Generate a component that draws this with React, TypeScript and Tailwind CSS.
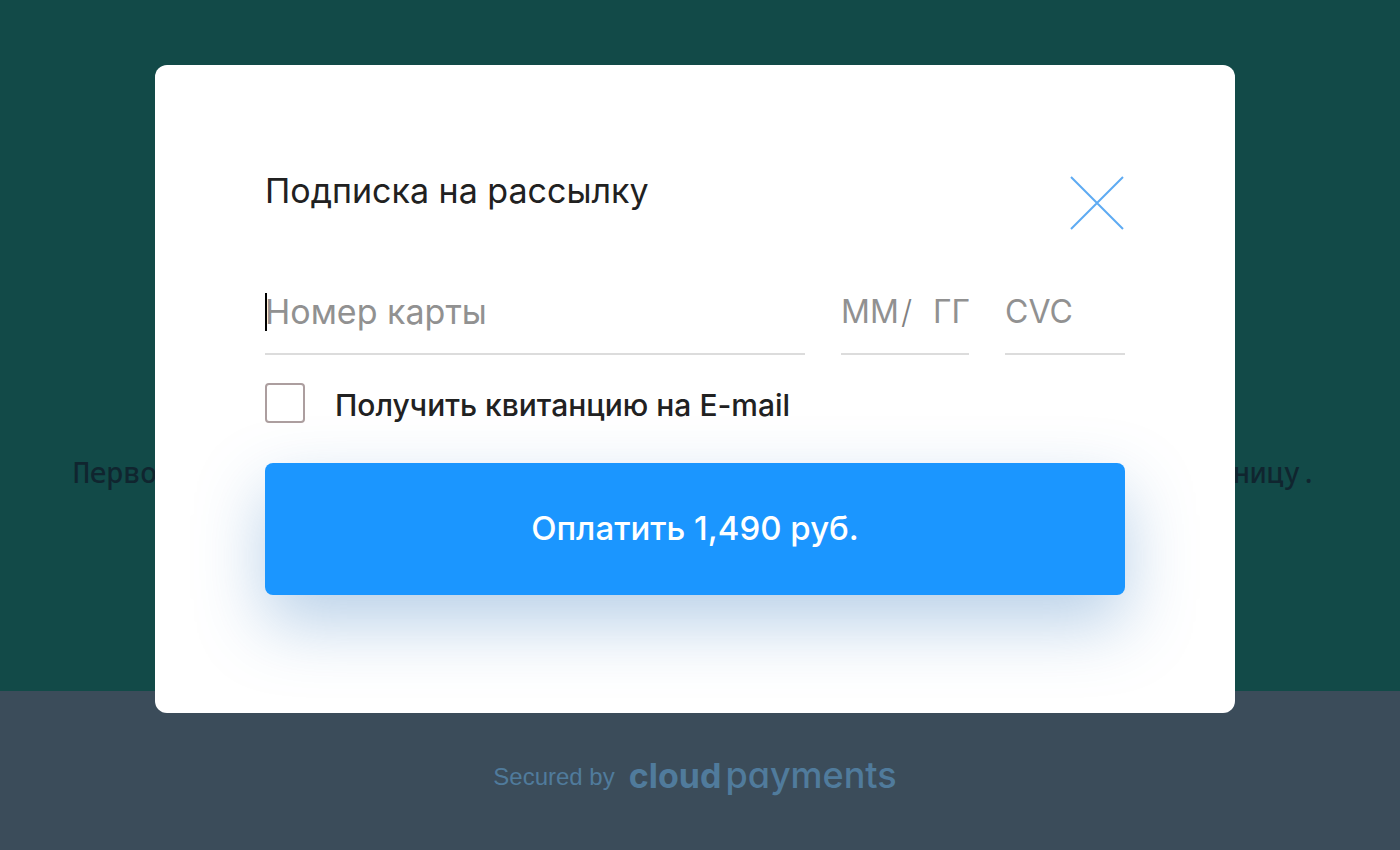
import { useState } from "react";

const inputClass =
  "block w-full bg-transparent p-0 leading-[40px] text-[#212121] outline-none placeholder:text-[#919191] placeholder:opacity-100";

const fieldClass = "border-b-2 border-[#dcdcdc] pt-px pb-[21px]";

const CloudPaymentsLogo: React.FC = () => {
  return (
    <span className="flex items-baseline gap-1 leading-[38px] [font-feature-settings:'cv11','ss01']">
      <span className="text-[34px] font-bold">cloud</span>
      <span className="text-[36px] font-medium">payments</span>
    </span>
  );
};

const PaymentDialog: React.FC = () => {
  const [receipt, setReceipt] = useState(false);

  return (
    <div
      role="dialog"
      aria-modal="true"
      aria-labelledby="dialog-title"
      className="w-full max-w-[1080px] rounded-xl bg-white px-[110px] pt-[106px] pb-[118px]"
    >
      <div className="flex items-start justify-between">
        <h1
          id="dialog-title"
          className="text-[34px] leading-[40px] font-normal text-[#212121]"
        >
          Подписка на рассылку
        </h1>
        <button type="button" aria-label="Закрыть" className="pt-[5px]">
          <svg
            viewBox="0 0 56 54"
            className="h-[54px] w-14"
            fill="none"
            stroke="#5eabf3"
            strokeWidth="2"
          >
            <path d="M2 1l52 52M54 1L2 53" />
          </svg>
        </button>
      </div>

      <form onSubmit={(e) => e.preventDefault()}>
        <div className="mt-[61px] flex gap-9">
          <div className={`relative min-w-0 flex-1 ${fieldClass}`}>
            <input
              aria-label="Номер карты"
              placeholder="Номер карты"
              inputMode="numeric"
              className={`${inputClass} text-[34px]`}
            />
            <span className="absolute top-[2px] left-0 h-[38px] w-[2px] bg-black" />
          </div>
          <div className={`flex w-32 ${fieldClass}`}>
            <input
              aria-label="Месяц"
              placeholder="ММ"
              maxLength={2}
              className={`${inputClass} flex-1 text-[32px]`}
            />
            <span className="w-8 text-[32px] leading-[40px] font-light text-[#808080]">
              /
            </span>
            <input
              aria-label="Год"
              placeholder="ГГ"
              maxLength={2}
              className={`${inputClass} max-w-9 text-[32px]`}
            />
          </div>
          <div className={`w-[120px] ${fieldClass}`}>
            <input
              aria-label="CVC"
              placeholder="CVC"
              maxLength={3}
              className={`${inputClass} text-[32px]`}
            />
          </div>
        </div>

        <div className="mt-7 flex h-10 items-center gap-[30px]">
          <input
            id="receipt"
            type="checkbox"
            checked={receipt}
            onChange={(e) => setReceipt(e.target.checked)}
            className="size-10 appearance-none rounded-[4px] border-2 border-[#ac9e9f] bg-white checked:bg-[#1b96ff]"
          />
          <label
            htmlFor="receipt"
            className="pt-1 text-[30px] leading-[36px] font-medium text-[#212121]"
          >
            Получить квитанцию на E-mail
          </label>
        </div>

        <button
          type="submit"
          className="mt-10 block h-[132px] w-full rounded-lg bg-[#1b96ff] text-[33px] font-medium text-white shadow-[0_28px_68px_rgba(59,125,192,0.36)]"
        >
          Оплатить 1,490 руб.
        </button>
      </form>
    </div>
  );
};

const App: React.FC = () => {
  return (
    <div className="relative flex min-h-screen flex-col font-['Inter',sans-serif]">
      <main className="flex flex-1 bg-[#124a48] pt-[452px]">
        <p className="flex w-full justify-between pr-[83px] pl-[73px] font-['Noto_Sans_Mono','DejaVu_Sans_Mono',monospace] text-[28px] leading-[40px] font-medium text-[#10252f]">
          <span>Перво</span>
          <span>ницу.</span>
        </p>
      </main>
      <footer className="h-[159px] bg-[#3b4c5a]" />

      <div className="absolute inset-0 flex flex-col items-center pt-[65px] pr-[10px]">
        <PaymentDialog />
        <a
          href="#cloudpayments"
          className="mt-[43px] flex items-start gap-[14px] text-[#507b9c]"
        >
          <span className="font-['Liberation_Sans',sans-serif] text-[24px] leading-[42px]">
            Secured by
          </span>
          <CloudPaymentsLogo />
        </a>
      </div>
    </div>
  );
};

export default App;
